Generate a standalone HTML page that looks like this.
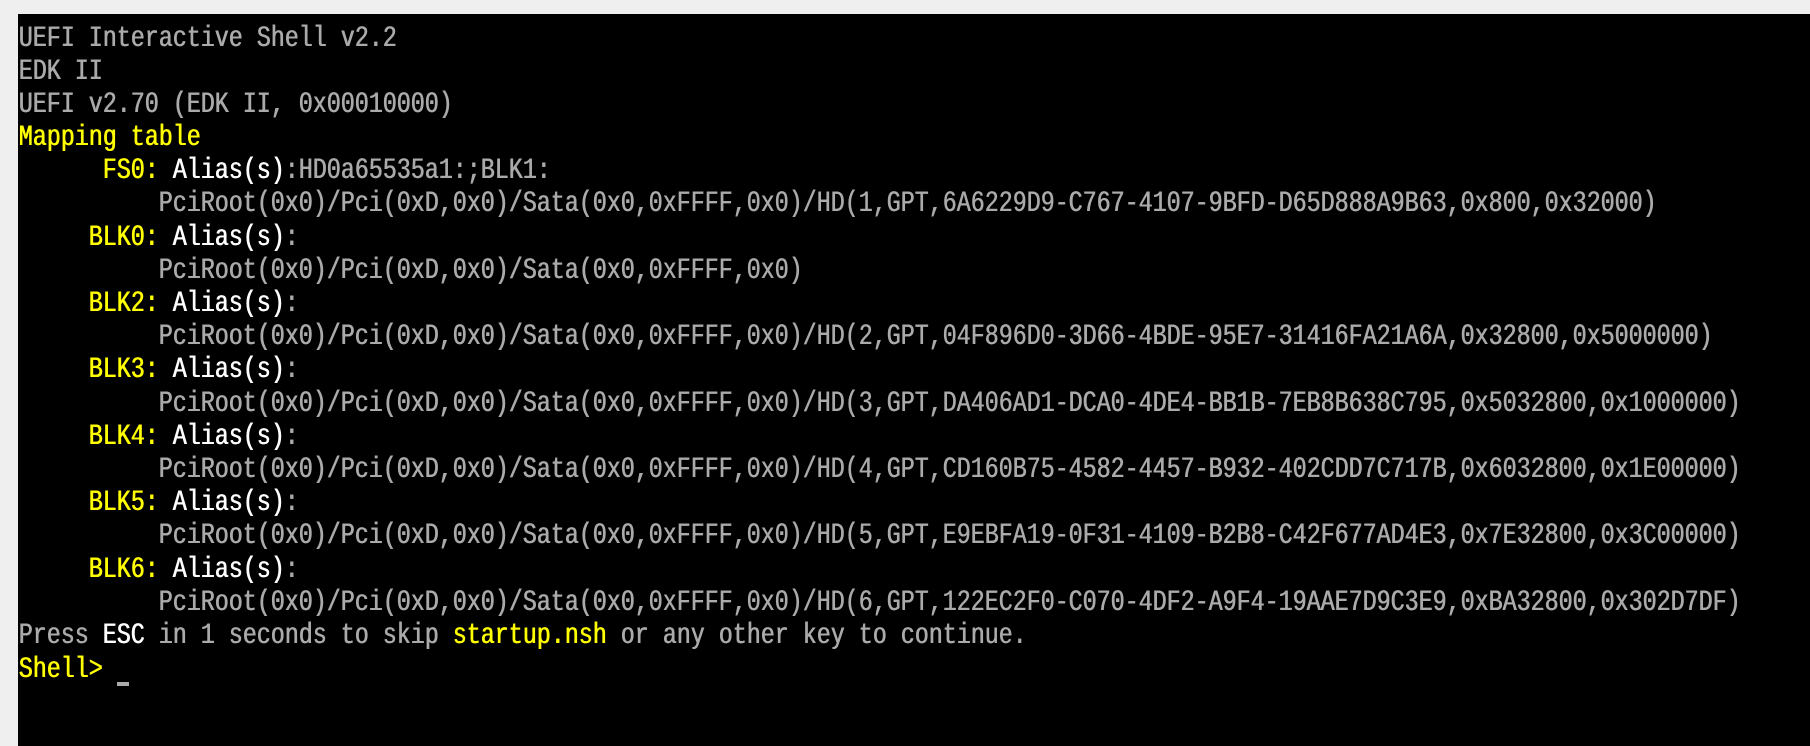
<!DOCTYPE html>
<html><head><meta charset="utf-8"><style>
html,body{margin:0;padding:0;background:#efefef;width:1810px;height:746px;overflow:hidden}
#scr{position:absolute;left:18px;top:14px;right:0;bottom:0;background:#000}
#t{position:absolute;left:18.5px;top:23.5px;font-family:"Liberation Mono",monospace;font-size:23.33px;color:#aaaaaa}
.l{white-space:pre;height:33.2px;line-height:33.2px;transform:scaleY(1.28);transform-origin:50% 55%;text-shadow:0.6px 0 0 currentColor}
.y{color:#ffff00}.w{color:#ffffff}
#cur{position:absolute;left:117px;top:682px;width:12px;height:4px;background:#aaa}
</style></head><body>
<div id="scr"></div>
<div id="t"><div class="l">UEFI Interactive Shell v2.2</div><div class="l">EDK II</div><div class="l">UEFI v2.70 (EDK II, 0x00010000)</div><div class="l y">Mapping table</div><div class="l">      <span class="y">FS0:</span> <span class="w">Alias(s)</span>:HD0a65535a1:;BLK1:</div><div class="l">          PciRoot(0x0)/Pci(0xD,0x0)/Sata(0x0,0xFFFF,0x0)/HD(1,GPT,6A6229D9-C767-4107-9BFD-D65D888A9B63,0x800,0x32000)</div><div class="l">     <span class="y">BLK0:</span> <span class="w">Alias(s)</span>:</div><div class="l">          PciRoot(0x0)/Pci(0xD,0x0)/Sata(0x0,0xFFFF,0x0)</div><div class="l">     <span class="y">BLK2:</span> <span class="w">Alias(s)</span>:</div><div class="l">          PciRoot(0x0)/Pci(0xD,0x0)/Sata(0x0,0xFFFF,0x0)/HD(2,GPT,04F896D0-3D66-4BDE-95E7-31416FA21A6A,0x32800,0x5000000)</div><div class="l">     <span class="y">BLK3:</span> <span class="w">Alias(s)</span>:</div><div class="l">          PciRoot(0x0)/Pci(0xD,0x0)/Sata(0x0,0xFFFF,0x0)/HD(3,GPT,DA406AD1-DCA0-4DE4-BB1B-7EB8B638C795,0x5032800,0x1000000)</div><div class="l">     <span class="y">BLK4:</span> <span class="w">Alias(s)</span>:</div><div class="l">          PciRoot(0x0)/Pci(0xD,0x0)/Sata(0x0,0xFFFF,0x0)/HD(4,GPT,CD160B75-4582-4457-B932-402CDD7C717B,0x6032800,0x1E00000)</div><div class="l">     <span class="y">BLK5:</span> <span class="w">Alias(s)</span>:</div><div class="l">          PciRoot(0x0)/Pci(0xD,0x0)/Sata(0x0,0xFFFF,0x0)/HD(5,GPT,E9EBFA19-0F31-4109-B2B8-C42F677AD4E3,0x7E32800,0x3C00000)</div><div class="l">     <span class="y">BLK6:</span> <span class="w">Alias(s)</span>:</div><div class="l">          PciRoot(0x0)/Pci(0xD,0x0)/Sata(0x0,0xFFFF,0x0)/HD(6,GPT,122EC2F0-C070-4DF2-A9F4-19AAE7D9C3E9,0xBA32800,0x302D7DF)</div><div class="l">Press <span class="w">ESC</span> in 1 seconds to skip <span class="y">startup.nsh</span> or any other key to continue.</div><div class="l y" style="margin-top:1px">Shell&gt; </div></div>
<div id="cur"></div>
</body></html>
